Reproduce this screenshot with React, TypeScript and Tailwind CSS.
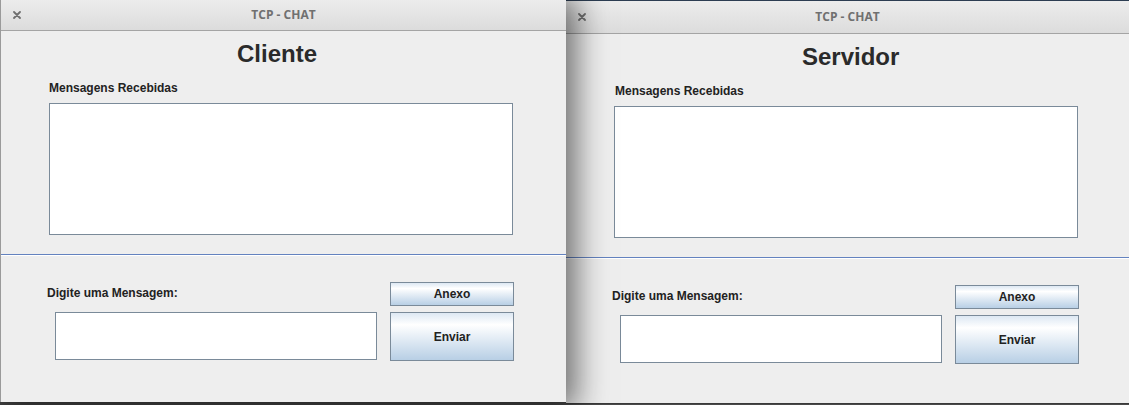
const sans = { fontFamily: '"Liberation Sans", Arial, sans-serif' };

function CloseIcon() {
  return (
    <svg width="8" height="8" viewBox="0 0 8 8" className="block">
      <path d="M1 1 L7 7 M7 1 L1 7" stroke="#707070" strokeWidth="1.8" strokeLinecap="round" />
    </svg>
  );
}

function TitleBar({ tall }: { tall?: boolean }) {
  return (
    <div
      className={
        "grid grid-cols-[1fr_auto_1fr] items-center border-b border-[#a4a4a4] bg-linear-to-b from-[#ececec] to-[#dcdcdc] " +
        (tall ? "h-[33px]" : "h-[31px]")
      }
    >
      <div className="pl-[12px] pb-[1px]">
        <CloseIcon />
      </div>
      <div
        className="text-[12px] font-bold leading-[14px] text-[#707070]"
        style={{ fontFamily: '"Open Sans", "Noto Sans", sans-serif' }}
      >
        TCP - CHAT
      </div>
      <div />
    </div>
  );
}

function JButton({ label, tall }: { label: string; tall?: boolean }) {
  return (
    <button
      className={
        "flex w-[124px] items-center justify-center border border-[#7a8a99] bg-linear-to-b from-[#dde8f3] via-white via-25% to-[#b8cfe5] text-[12px] font-bold text-[#222]" +
        (tall ? " h-[49px]" : " h-[24px]")
      }
      style={sans}
    >
      {label}
    </button>
  );
}

function ChatWindow({ heading, back }: { heading: string; back?: boolean }) {
  return (
    <div
      className={
        back
          ? "flex h-[404px] w-[563px] shrink-0 flex-col border-t border-b border-t-[#2c3d52] border-b-[#3a3a3a] bg-[#eeeeee]"
          : "relative z-10 flex h-[402px] w-[566px] shrink-0 flex-col border-l border-[#9a9a9a] bg-[#eeeeee] shadow-[4px_2px_30px_6px_rgba(0,0,0,0.55)]"
      }
      style={sans}
    >
      <TitleBar tall={back} />
      <div className="pl-[48px]">
        <div className="pl-[188px] pt-[9px] text-[24px] font-bold leading-[28px] text-[#2a2a2a]">
          {heading}
        </div>
        <div
          className={
            "mt-[13px] text-[12px] font-bold leading-[14px] text-[#222]" +
            (back ? " pl-[1px]" : "")
          }
        >
          Mensagens Recebidas
        </div>
        <div className="mt-[8px] h-[132px] w-[464px] border border-[#7a8a99] bg-white" />
      </div>
      <div className="mt-[19px] border-t border-b border-t-[#6382bf] border-b-white" />
      <div className="flex items-start pt-[26px]">
        <div className="w-[389px] shrink-0 pl-[46px]">
          <div className="pt-[4px] text-[12px] font-bold leading-[14px] text-[#222]">
            Digite uma Mensagem:
          </div>
          <div className="ml-[8px] mt-[12px] h-[48px] w-[322px] border border-[#7a8a99] bg-white" />
        </div>
        <div className="flex flex-col gap-[6px]">
          <JButton label="Anexo" />
          <JButton label="Enviar" tall />
        </div>
      </div>
    </div>
  );
}

export default function App() {
  return (
    <div className="flex h-[405px] w-[1129px] items-start overflow-hidden bg-[#4a4a4a]">
      <ChatWindow heading="Cliente" />
      <ChatWindow heading="Servidor" back />
    </div>
  );
}
